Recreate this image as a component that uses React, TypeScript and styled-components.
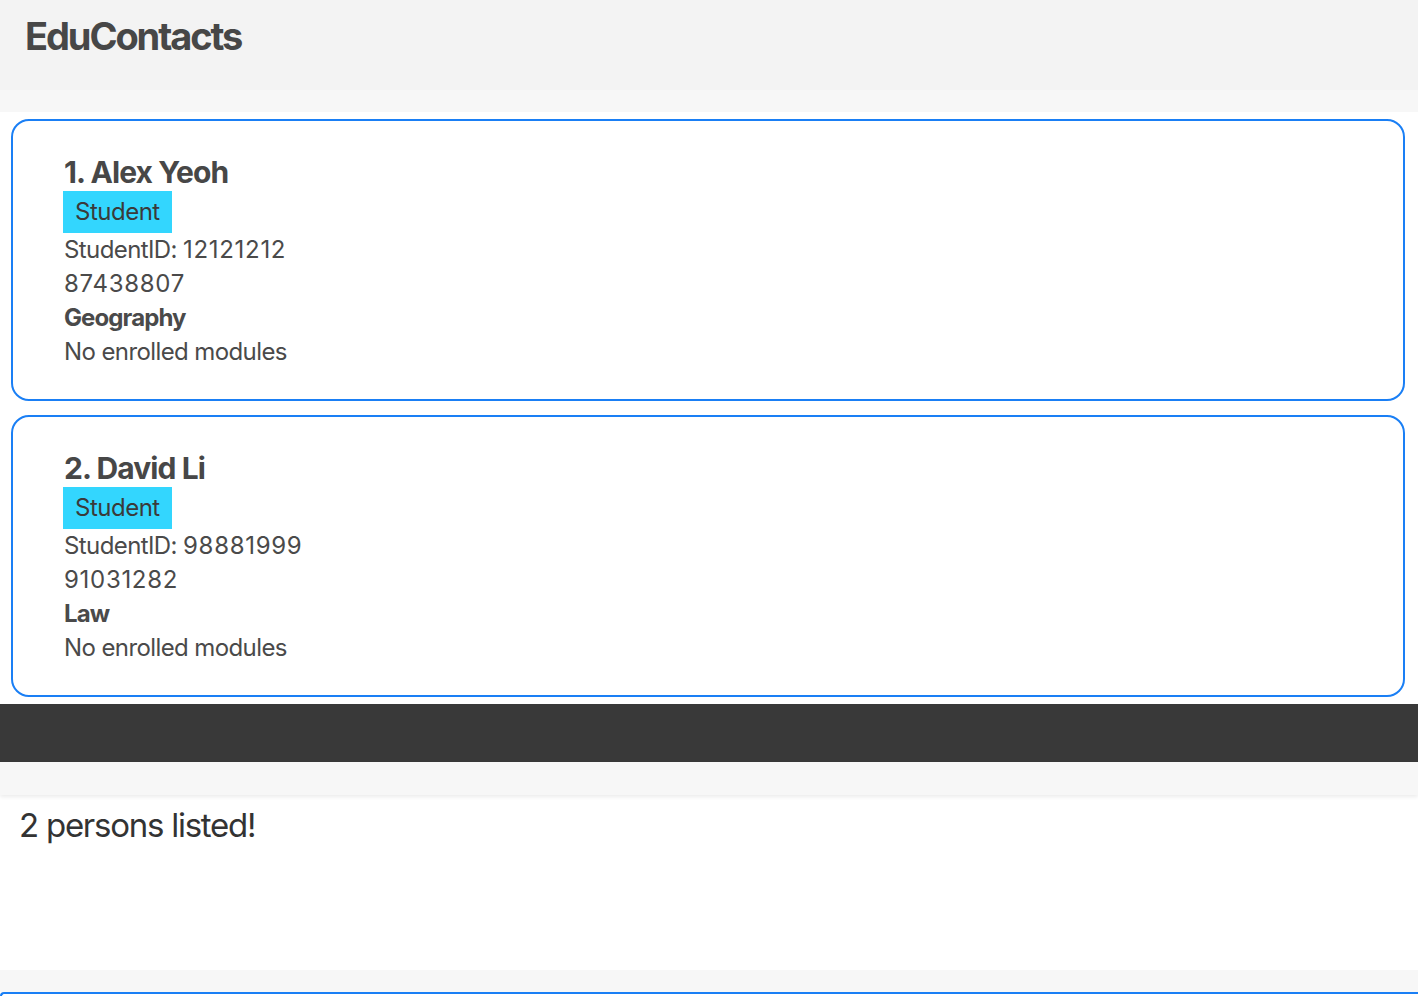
import React, { FC, ReactElement } from 'react';
import styled, { createGlobalStyle } from 'styled-components';

const GlobalStyle = createGlobalStyle`
  html, body {
    margin: 0;
    padding: 0;
    height: 100%;
    overflow: hidden;
    background: #ffffff;
  }
  body {
    font-family: Inter, "Noto Sans", sans-serif;
    color: #4a4a4a;
  }
`;

const Window = styled.div`
  width: 1418px;
  height: 996px;
  display: flex;
  flex-direction: column;
  overflow: hidden;
`;

const Header = styled.header`
  height: 90px;
  flex-shrink: 0;
  background: #f3f3f3;
  padding: 12px 0 0 25px;
  box-sizing: border-box;
`;

const AppTitle = styled.h1`
  margin: 0;
  font-size: 38px;
  font-weight: 700;
  letter-spacing: -2.1px;
  line-height: 48px;
  color: #474747;
`;

const Strip = styled.div<{ $h: number; $shadow?: boolean }>`
  height: ${(p) => p.$h}px;
  flex-shrink: 0;
  background: #f7f7f7;
  position: relative;
  z-index: 1;
  box-shadow: ${(p) => (p.$shadow ? '0 2px 4px rgba(0,0,0,0.08)' : 'none')};
`;

const PersonList = styled.div`
  height: 592px;
  flex-shrink: 0;
  background: #ffffff;
  padding: 7px 13px 7px 11px;
  box-sizing: border-box;
  display: flex;
  flex-direction: column;
  gap: 14px;
`;

const Card = styled.div`
  height: 282px;
  box-sizing: border-box;
  border: 2px solid #1a7ff5;
  border-radius: 18px;
  padding: 32px 0 0 51px;
`;

const Name = styled.div`
  font-size: 30px;
  font-weight: 700;
  letter-spacing: -0.9px;
  line-height: 38px;
  color: #474747;
`;

const Tag = styled.span`
  display: inline-block;
  margin-left: -1px;
  background: #33d6fe;
  color: #3a3a3a;
  font-size: 24px;
  line-height: 42px;
  padding: 0 12px;
  letter-spacing: -0.5px;
`;

const Line = styled.div<{ $bold?: boolean }>`
  font-size: 24px;
  line-height: 34px;
  font-weight: ${(p) => (p.$bold ? 700 : 400)};
  letter-spacing: ${(p) => (p.$bold ? '-0.9px' : '-0.6px')};
  color: #4a4a4a;
`;

const Digits = styled.span`
  letter-spacing: 0.7px;
`;

const CommandBar = styled.div`
  height: 58px;
  flex-shrink: 0;
  background: #393939;
`;

const ResultBox = styled.div`
  height: 175px;
  flex-shrink: 0;
  background: #ffffff;
  padding: 8px 0 0 19px;
  box-sizing: border-box;
  font-size: 33px;
  letter-spacing: -1.25px;
  line-height: 44px;
  color: #333333;
`;

const StatusBox = styled.div`
  flex: 1;
  border-top: 2px solid #1a7ff5;
  border-left: 2px solid #1a7ff5;
  border-radius: 12px 0 0 0;
  background: #ffffff;
`;

type Person = {
  name: string;
  studentId: string;
  phone: string;
  major: string;
};

const people: Person[] = [
  { name: 'Alex Yeoh', studentId: '12121212', phone: '87438807', major: 'Geography' },
  { name: 'David Li', studentId: '98881999', phone: '91031282', major: 'Law' },
];

const PersonCard: FC<{ person: Person; index: number }> = ({ person, index }): ReactElement => (
  <Card>
    <Name>
      {index}. {person.name}
    </Name>
    <Tag>Student</Tag>
    <Line>
      StudentID: <Digits>{person.studentId}</Digits>
    </Line>
    <Line>
      <Digits>{person.phone}</Digits>
    </Line>
    <Line $bold>{person.major}</Line>
    <Line>No enrolled modules</Line>
  </Card>
);

const App: FC = (): ReactElement => (
  <>
    <GlobalStyle />
    <Window>
      <Header>
        <AppTitle>EduContacts</AppTitle>
      </Header>
      <Strip $h={22} />
      <PersonList>
        {people.map((p, i) => (
          <PersonCard key={p.studentId} person={p} index={i + 1} />
        ))}
      </PersonList>
      <CommandBar />
      <Strip $h={33} $shadow />
      <ResultBox>{people.length} persons listed!</ResultBox>
      <Strip $h={22} />
      <StatusBox />
    </Window>
  </>
);

export default App;
